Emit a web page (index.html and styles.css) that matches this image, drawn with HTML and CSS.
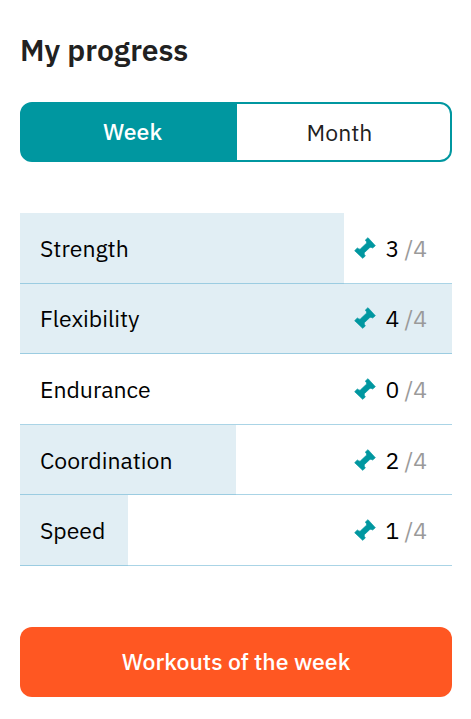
FILE: index.html
```
<!DOCTYPE html>
<html lang="en">
<head>
  <meta charset="utf-8">
  <meta name="viewport" content="width=device-width, initial-scale=1">
  <title>My progress</title>
  <link rel="stylesheet" href="styles.css">
</head>
<body>

  <!-- Dumbbell icon, reused in every row -->
  <svg class="sprite" aria-hidden="true">
    <symbol id="dumbbell" viewBox="12 17 66 66">
      <path d="M46 26 L54 19 L76 43 L68 50 Q62 46 59 49 L43 64 Q41 68 46 74 L38 81 L14 58 L22 50 Q28 55 31 53 L50 35 Q51 32 46 26 Z"/>
    </symbol>
  </svg>

  <main class="progress">
    <h1>My progress</h1>

    <div class="period">
      <button type="button" class="period-btn active" aria-pressed="true">Week</button>
      <button type="button" class="period-btn" aria-pressed="false">Month</button>
    </div>

    <ul class="skills">
      <li class="skill" style="--done: 75%">
        <span class="name">Strength</span>
        <svg class="icon" aria-hidden="true"><use href="#dumbbell"/></svg>
        <span class="count">3</span>
        <span class="total">/4</span>
      </li>
      <li class="skill" style="--done: 100%">
        <span class="name">Flexibility</span>
        <svg class="icon" aria-hidden="true"><use href="#dumbbell"/></svg>
        <span class="count">4</span>
        <span class="total">/4</span>
      </li>
      <li class="skill" style="--done: 0%">
        <span class="name">Endurance</span>
        <svg class="icon" aria-hidden="true"><use href="#dumbbell"/></svg>
        <span class="count">0</span>
        <span class="total">/4</span>
      </li>
      <li class="skill" style="--done: 50%">
        <span class="name">Coordination</span>
        <svg class="icon" aria-hidden="true"><use href="#dumbbell"/></svg>
        <span class="count">2</span>
        <span class="total">/4</span>
      </li>
      <li class="skill" style="--done: 25%">
        <span class="name">Speed</span>
        <svg class="icon" aria-hidden="true"><use href="#dumbbell"/></svg>
        <span class="count">1</span>
        <span class="total">/4</span>
      </li>
    </ul>

    <button type="button" class="workouts">Workouts of the week</button>
  </main>

</body>
</html>
```
FILE: styles.css
```
* {
  box-sizing: border-box;
}
body {
  margin: 0;
  background: #fff;
  color: #000;
  font-family: "IBM Plex Sans", "Noto Sans", sans-serif;
  font-size: 23px;
  line-height: 32px;
}
button {
  font: inherit;
  cursor: pointer;
}
.sprite {
  display: none;
}
.progress {
  padding: 30px 19px 22px 20px;
}
h1 {
  margin: 0 0 32px;
  color: #212121;
  font-size: 30px;
  font-weight: 600;
  line-height: 40px;
}

/* Week / Month switch */
.period {
  display: flex;
  height: 60px;
  margin-bottom: 51px;
  border: 2px solid #0097a0;
  border-radius: 12px;
  background: #0097a0;
  overflow: hidden;
}
.period-btn {
  flex: 1;
  padding: 0 8px 0 0;
  border: 0;
  background: #fff;
  color: #212121;
}
.period-btn.active {
  padding: 0 0 2px 8px;
  border-right: 2px solid #0097a0;
  background: #0097a0;
  color: #fff;
  font-weight: 500;
}

/* One row per skill, the tint shows how much is done */
.skills {
  display: grid;
  grid-auto-rows: 1fr;
  min-height: 353px;
  margin: 0 0 61px;
  padding: 0;
  list-style: none;
}
.skill {
  display: flex;
  align-items: center;
  padding: 0 25px 0 20px;
  border-bottom: 1px solid rgba(85, 170, 205, 0.5);
  background: linear-gradient(#e1eef4, #e1eef4) no-repeat border-box;
  background-size: var(--done) 100%;
}
.name {
  flex: 1;
}
.icon {
  width: 22px;
  height: 22px;
  margin-right: 10px;
  fill: #0097a0;
  stroke: #0097a0;
  stroke-width: 2;
  stroke-linejoin: round;
}
.count {
  margin-right: 5px;
}
.total {
  color: #9a9a9a;
}

.workouts {
  width: 100%;
  height: 70px;
  padding: 0 0 2px;
  border: 0;
  border-radius: 12px;
  background: #ff5722;
  color: #fff;
  font-weight: 500;
}
```
